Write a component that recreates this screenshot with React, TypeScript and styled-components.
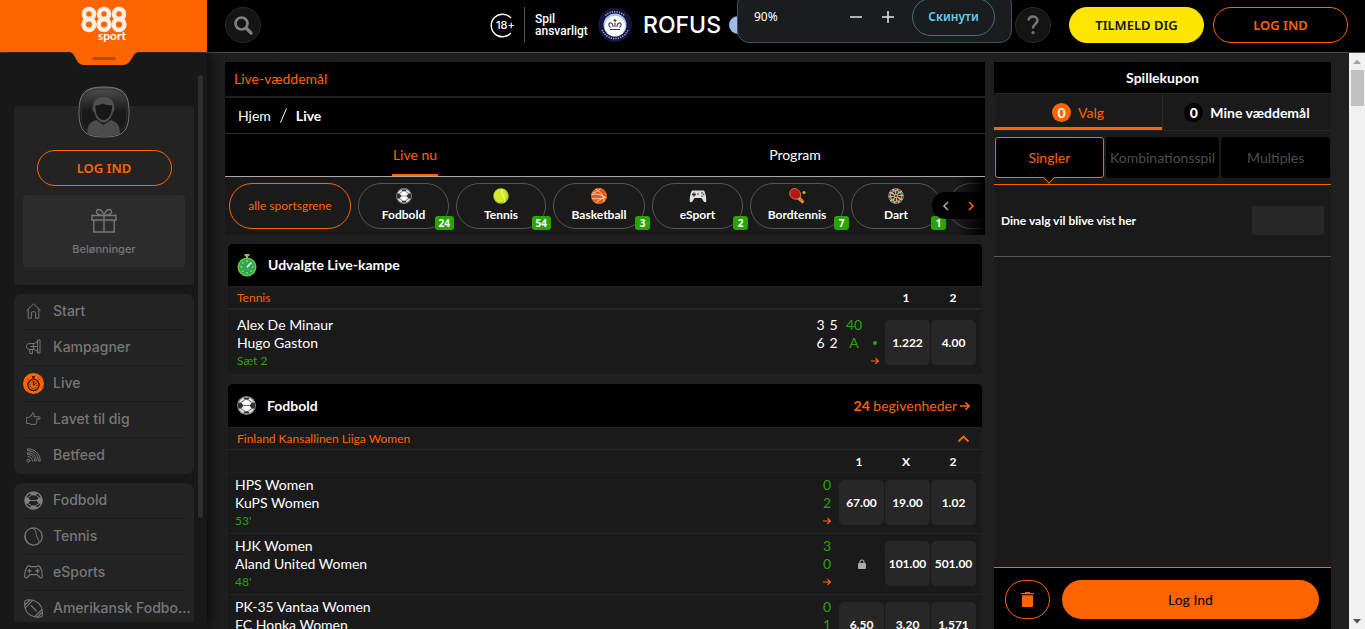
import React from "react";
import styled, { createGlobalStyle } from "styled-components";

const ORANGE = "#ff6400";
const GREEN = "#2aa500";

const Global = createGlobalStyle`
  * { box-sizing: border-box; }
  body { margin: 0; background: #1f1f1f; color: #fff; font-family: Lato, "Noto Sans", sans-serif; font-size: 14px; overflow: hidden; }
  button, input { font-family: inherit; margin: 0; }
  button { cursor: pointer; padding: 0; }
  a { color: inherit; text-decoration: none; }
  h1, h2, h3, ul { margin: 0; padding: 0; list-style: none; font-weight: 400; }
  svg { display: block; flex: none; }
`;

/* ---------- page frame ---------- */
const Page = styled.div`
  height: 100vh;
  display: flex;
  flex-direction: column;
`;
const Header = styled.header`
  flex: none;
  display: flex;
  height: 53px;
  background: #000;
  border-bottom: 1px solid #4a4a4a;
`;
const Brand = styled.a`
  position: relative;
  z-index: 5;
  width: 207px;
  height: 52px;
  background: ${ORANGE};
  display: flex;
  justify-content: center;
  padding-top: 4px;
`;
const BrandTab = styled.svg`
  position: absolute;
  left: 69px;
  top: 52px;
`;
const HeaderBar = styled.div`
  flex: 1;
  display: flex;
  align-items: center;
  padding: 0 17px 2px 18px;
`;
const RoundButton = styled.button`
  width: 36px;
  height: 36px;
  border-radius: 50%;
  border: 1px solid #2a2a2a;
  background: #141414;
  display: flex;
  align-items: center;
  justify-content: center;
`;
const Safe = styled.div`
  margin-left: auto;
  display: flex;
  align-items: center;
`;
const SafeText = styled.a`
  border-left: 1px solid #555;
  margin: 0 12px 0 9px;
  padding: 6px 0 6px 10px;
  font: 500 12px/12px Roboto, sans-serif;
  width: 62px;
`;
const Rofus = styled.a`
  display: flex;
  align-items: center;
  gap: 11px;
  font: 500 23px/26px Inter, sans-serif;
`;
const RofusDot = styled.span`
  width: 18px;
  height: 18px;
  margin: 0 268px 0 8px;
  border-radius: 50%;
  background: #9dbcea;
`;
const PillButton = styled.button<{ $solid?: boolean; $ml?: number }>`
  width: 135px;
  height: 36px;
  margin-left: ${(p) => p.$ml ?? 0}px;
  border-radius: 18px;
  border: 1px solid ${(p) => (p.$solid ? "#ffe600" : ORANGE)};
  background: ${(p) => (p.$solid ? "#ffe600" : "transparent")};
  color: ${(p) => (p.$solid ? "#111" : ORANGE)};
  font: 600 13px/18px "Noto Sans", sans-serif;
`;
const Body = styled.div`
  flex: 1;
  min-height: 0;
  display: flex;
`;

/* ---------- browser zoom popup ---------- */
const ZoomPopup = styled.div`
  position: absolute;
  z-index: 10;
  top: -8px;
  right: 353px;
  width: 275px;
  height: 51px;
  padding: 8px 16px 0;
  display: flex;
  align-items: center;
  background: #191d20;
  border: 1px solid #465053;
  border-radius: 12px;
  font: 12px/16px "Noto Sans", sans-serif;
`;
const ZoomLevel = styled.span`
  flex: 1;
  padding-bottom: 9px;
`;
const ZoomStep = styled.button`
  width: 32px;
  height: 32px;
  margin-bottom: 9px;
  border: 0;
  background: none;
  display: flex;
  align-items: center;
  justify-content: center;
`;
const ZoomReset = styled.button`
  width: 83px;
  height: 38px;
  margin: 0 0 9px 8px;
  border: 1px solid #4f6a6e;
  border-radius: 19px;
  background: none;
  color: #63cfe6;
  font: 600 12px/18px "Noto Sans", sans-serif;
`;

/* ---------- sidebar ---------- */
const Sidebar = styled.aside`
  position: relative;
  z-index: 2;
  flex: none;
  width: 207px;
  background: #181818;
  box-shadow: 0 0 16px #000;
  padding: 22px 4px 7px 14px;
  display: flex;
  justify-content: space-between;
`;
const SideScroll = styled.div`
  width: 180px;
  overflow: hidden;
  display: flex;
  flex-direction: column;
`;
const SideThumb = styled.div`
  width: 5px;
  height: 81%;
  border-radius: 3px;
  background: #2e2e2e;
`;
const Profile = styled.section`
  flex: none;
  margin-top: 31px;
  height: 179px;
  padding: 0 9px;
  border-radius: 4px;
  background: #232323;
  display: flex;
  flex-direction: column;
  align-items: center;
`;
const Avatar = styled.div`
  margin: -20px 0 12px;
  width: 52px;
  height: 52px;
  flex: none;
`;
const Rewards = styled.a`
  width: 100%;
  height: 72px;
  margin-top: 9px;
  padding-top: 13px;
  border-radius: 4px;
  background: #2c2c2c;
  color: #777;
  display: flex;
  flex-direction: column;
  align-items: center;
  gap: 8px;
  font: 500 11px/16px Inter, sans-serif;
`;
const Menu = styled.ul`
  flex: none;
  margin-top: 9px;
  padding: 0 9px;
  border-radius: 8px;
  background: #232323;
`;
const MenuItem = styled.li`
  height: 36px;
  border-bottom: 1px solid #1c1c1c;
  &:last-child { border-bottom: 0; }
`;
const MenuLink = styled.a`
  height: 34px;
  display: flex;
  align-items: center;
  gap: 9px;
  color: #777;
  white-space: nowrap;
  font: 500 14px/20px Inter, sans-serif;
`;
const IconSlot = styled.span`
  flex: none;
  width: 21px;
  height: 21px;
  display: flex;
  align-items: center;
  justify-content: center;
`;

/* ---------- centre column ---------- */
const Main = styled.main`
  flex: 1;
  min-width: 0;
  overflow: hidden;
  margin: 9px 9px 0 18px;
`;
const TitleBar = styled.h1`
  height: 34px;
  margin-bottom: 2px;
  padding: 0 9px;
  background: #000;
  color: ${ORANGE};
  font-size: 14px;
  line-height: 34px;
`;
const Crumbs = styled.nav`
  height: 36px;
  padding: 0 13px;
  display: flex;
  align-items: center;
  gap: 9px;
  background: #000;
  border-bottom: 1px solid #2b2b2b;
  font-size: 14px;
`;
const Tabs = styled.div`
  display: flex;
  height: 43px;
  background: #000;
  border-bottom: 1px solid #aaa;
`;
const Tab = styled.button<{ $on?: boolean }>`
  flex: 1;
  border: 0;
  background: none;
  color: ${(p) => (p.$on ? ORANGE : "#fff")};
  font-size: 14px;
  display: flex;
  justify-content: center;
  span {
    padding: 0 1px;
    line-height: 42px;
    height: 42px;
    border-bottom: 2px solid ${(p) => (p.$on ? ORANGE : "transparent")};
  }
`;
const Strip = styled.div`
  position: relative;
  height: 58px;
  padding: 6px 4px;
  overflow: hidden;
  background: #1a1a1a;
  display: flex;
  gap: 7px;
`;
const Sport = styled.button<{ $w: number; $on?: boolean }>`
  position: relative;
  flex: none;
  width: ${(p) => p.$w}px;
  height: 46px;
  border: 1px solid ${(p) => (p.$on ? ORANGE : "#555")};
  border-radius: 23px;
  background: none;
  color: ${(p) => (p.$on ? ORANGE : "#fff")};
  font-size: 12px;
  font-weight: ${(p) => (p.$on ? 400 : 700)};
  line-height: 16px;
  display: flex;
  flex-direction: column;
  align-items: center;
  justify-content: center;
  gap: 3px;
  padding-bottom: ${(p) => (p.$on ? 0 : 1)}px;
`;
const Count = styled.span`
  position: absolute;
  right: -6px;
  bottom: -2px;
  height: 14px;
  min-width: 15px;
  padding: 0 4px;
  border-radius: 3px;
  background: ${GREEN};
  color: #fff;
  font: 700 10px/14px "Noto Sans", sans-serif;
`;
const Fade = styled.div`
  position: absolute;
  right: 0;
  top: 0;
  bottom: 0;
  width: 28px;
  background: linear-gradient(90deg, transparent, #000);
`;
const Pager = styled.div`
  position: absolute;
  right: 0;
  top: 15px;
  width: 53px;
  height: 27px;
  border-radius: 14px 0 0 14px;
  background: #000;
  display: flex;
`;
const PagerButton = styled.button`
  width: 26px;
  border: 0;
  background: none;
  display: flex;
  align-items: center;
  justify-content: center;
`;
const Card = styled.section`
  margin: 9px 3px 0;
  border-radius: 5px;
  overflow: hidden;
  background: #1a1a1a;
  & + & { margin-top: 10px; }
`;
const CardHead = styled.div<{ $h: number }>`
  height: ${(p) => p.$h}px;
  padding: 0 12px 0 9px;
  background: #000;
  border-bottom: 1px solid #222;
  display: flex;
  align-items: center;
  gap: 11px;
`;
const CardTitle = styled.h2`
  flex: 1;
  font-size: 14px;
  line-height: 18px;
  font-weight: 700;
`;
const MoreLink = styled.a`
  color: ${ORANGE};
  font-size: 14px;
  display: flex;
  align-items: center;
  gap: 3px;
`;
const SubHead = styled.div<{ $compact?: boolean; $plain?: boolean }>`
  height: ${(p) => (p.$compact ? 22 : 23)}px;
  padding: 0 6px 0 9px;
  display: flex;
  align-items: center;
  border-bottom: ${(p) => (p.$plain ? "0" : p.$compact ? "1px solid #262626" : "2px solid #262626")};
`;
const League = styled.h3`
  flex: 1;
  color: ${ORANGE};
  font-size: 12px;
`;
const Collapse = styled.button`
  border: 0;
  margin-right: 6px;
  background: none;
`;
const Cols = styled.div`
  display: flex;
  gap: 1px;
  margin-left: auto;
  span {
    width: 46px;
    text-align: center;
    font-size: 12px;
    font-weight: 700;
  }
`;
const EventRow = styled.article<{ $lined?: boolean }>`
  display: flex;
  align-items: flex-start;
  height: ${(p) => (p.$lined ? 61 : 64)}px;
  padding: ${(p) => (p.$lined ? "3px 6px 0 7px" : "6px 6px 0 9px")};
  border-top: ${(p) => (p.$lined ? "1px solid #202020" : "0")};
  & + & { border-top-color: #242424; }
`;
const Teams = styled.a`
  flex: 1;
  font-size: 14px;
  line-height: 18px;
  display: flex;
  flex-direction: column;
  small {
    color: ${GREEN};
    font-size: 12px;
  }
`;
const ScoreCol = styled.div<{ $w: number; $live?: boolean }>`
  width: ${(p) => p.$w}px;
  color: ${(p) => (p.$live ? GREEN : "#fff")};
  font-size: 14px;
  line-height: 18px;
  display: flex;
  flex-direction: column;
  align-items: center;
`;
const LineBox = styled.span`
  height: 18px;
  display: flex;
  align-items: center;
`;
const ServeDot = styled.i`
  width: 4px;
  height: 4px;
  border-radius: 50%;
  background: ${GREEN};
`;
const Odds = styled.div`
  display: flex;
  gap: 1px;
  margin: 4px 0 0 4px;
`;
const Odd = styled.button<{ $locked?: boolean }>`
  width: 45px;
  height: 45px;
  border: 0;
  border-radius: 5px;
  background: ${(p) => (p.$locked ? "transparent" : "#272727")};
  color: #fff;
  font-size: 12px;
  font-weight: 700;
  display: flex;
  align-items: center;
  justify-content: center;
`;

/* ---------- bet slip ---------- */
const Slip = styled.aside`
  flex: none;
  width: 337px;
  margin: 9px 18px 0 0;
  background: #1a1a1a;
  display: flex;
  flex-direction: column;
`;
const SlipTitle = styled.h2`
  height: 32px;
  background: #000;
  border-bottom: 1px solid #222;
  text-align: center;
  font-size: 14px;
  font-weight: 700;
  line-height: 32px;
`;
const SlipTabs = styled.div`
  height: 37px;
  display: flex;
  border-bottom: 1px solid #272727;
`;
const SlipTab = styled.button<{ $on?: boolean }>`
  flex: 1;
  border: 0;
  border-left: ${(p) => (p.$on ? "0" : "1px solid #2b2b2b")};
  box-shadow: ${(p) => (p.$on ? `inset 0 -3px 0 ${ORANGE}` : "none")};
  background: none;
  color: ${(p) => (p.$on ? ORANGE : "#fff")};
  font-size: 14px;
  font-weight: ${(p) => (p.$on ? 400 : 700)};
  display: flex;
  align-items: center;
  justify-content: center;
  gap: 7px;
`;
const Bubble = styled.b<{ $on?: boolean }>`
  width: 19px;
  height: 19px;
  border-radius: 50%;
  background: ${(p) => (p.$on ? ORANGE : "#000")};
  color: #fff;
  font-size: 14px;
  line-height: 19px;
`;
const Kinds = styled.div`
  display: flex;
  gap: 2px;
  padding: 6px 1px;
  border-bottom: 1px solid ${ORANGE};
`;
const Kind = styled.button<{ $on?: boolean; $wide?: boolean }>`
  position: relative;
  flex: ${(p) => (p.$wide ? 114 : 109)} 1 0;
  height: 41px;
  border: 1px solid ${(p) => (p.$on ? ORANGE : "#000")};
  border-radius: 3px;
  background: #000;
  color: ${(p) => (p.$on ? ORANGE : "#4c4c4c")};
  font-size: 14px;
`;
const Notch = styled.i`
  position: absolute;
  left: 50%;
  bottom: -5px;
  width: 8px;
  height: 8px;
  margin-left: -4px;
  background: #000;
  border: solid ${ORANGE};
  border-width: 0 1px 1px 0;
  transform: rotate(45deg);
`;
const Empty = styled.div`
  height: 72px;
  padding: 0 7px;
  display: flex;
  align-items: center;
  justify-content: space-between;
  border-bottom: 1px solid #555;
  font-size: 12px;
  font-weight: 700;
`;
const Stub = styled.div`
  width: 72px;
  height: 29px;
  border-radius: 2px;
  background: #272727;
`;
const SlipFoot = styled.div`
  margin-top: auto;
  height: 62px;
  padding: 12px 12px 0 11px;
  display: flex;
  gap: 12px;
  background: #000;
  border-top: 1px solid ${ORANGE};
`;
const Trash = styled.button`
  width: 45px;
  height: 39px;
  border: 1px solid ${ORANGE};
  border-radius: 20px;
  background: none;
  display: flex;
  align-items: center;
  justify-content: center;
`;
const SlipLogin = styled.button`
  flex: 1;
  height: 39px;
  border: 0;
  border-radius: 20px;
  background: ${ORANGE};
  color: #000;
  font-size: 14px;
`;
const PageScroll = styled.div`
  flex: none;
  width: 16px;
  background: #f1f1f1;
  display: flex;
  flex-direction: column;
  align-items: center;
  padding: 6px 0 5px;
`;
const PageThumb = styled.div`
  width: 13px;
  height: 36px;
  margin: 6px 0 auto;
  background: #c1c1c1;
`;

/* ---------- icons ---------- */
const line = { fill: "none", stroke: "#777", strokeWidth: 1, strokeLinecap: "round", strokeLinejoin: "round" } as const;

const Arrow = ({ s = 8 }: { s?: number }) => (
  <svg width={s} height={s} viewBox="0 0 8 8" fill="none" stroke={ORANGE} strokeWidth="1.2">
    <path d="M0 4h7.2M4.4 1.1L7.3 4 4.4 6.9" />
  </svg>
);

const Football = ({ s = 16 }: { s?: number }) => (
  <svg width={s} height={s} viewBox="0 0 20 20">
    <circle cx="10" cy="10" r="9.200" fill="#e8e8e8" stroke="#8d8d8d" strokeWidth="1.400" />
    <path d="M6.800 1.800h6.400L11.800 4H8.200zM6.800 18.200h6.400L11.800 16H8.200zM1.400 7l2.800-.2L6.800 10l-2.600 3.400-2.600-.2A9 9 0 0 1 1.400 7zM18.600 7l-2.800-.2L13.200 10l2.600 3.400 2.600-.2a9 9 0 0 0 .2-6.200z" fill="#2f2f2f" />
    <path d="M8.200 4L4.200 6.800M11.800 4l4 2.800M8.200 16l-4-2.600M11.800 16l4-2.600M6.800 10h6.400" stroke="#555" strokeWidth=".9" />
    <circle cx="10" cy="7.200" r="2.500" fill="#fff" />
    <circle cx="10" cy="12.900" r="2.500" fill="#fff" />
  </svg>
);

const TennisBall = () => (
  <svg width="16" height="16" viewBox="0 0 16 16">
    <circle cx="8" cy="8" r="7.700" fill="#a8d51f" />
    <circle cx="7.500" cy="7.500" r="6.400" fill="#d9ea2c" />
    <path d="M8.500 .8c.8 3 .4 5 2 8 1 2 1.300 3.600 1 5.400" fill="none" stroke="#f4f7c0" strokeWidth=".9" />
  </svg>
);

const Basket = () => (
  <svg width="16" height="16" viewBox="0 0 16 16">
    <circle cx="8" cy="8" r="7.700" fill="#e85a16" stroke="#f08a2a" strokeWidth=".6" />
    <path d="M.6 6.500c5-1 10 0 14.600 3.500M4.500 1.200c5 2 8.500 7 8.500 12.600M1 10.500c4 .5 8 .5 13.500-1M9.500 .8C7 3 4 4.500 1.500 5M5 15c1.500-2.500 5-4 8-5" fill="none" stroke="#fbd9bd" strokeWidth=".9" />
  </svg>
);

const Pad = () => (
  <svg width="18" height="16" viewBox="0 0 18 16">
    <path d="M3.500 2.500h11c1.500 0 3 7 2.800 10.500-.1 1.600-2 1.600-2.800.2L12.500 10h-7l-2 3.200C2.700 14.600.8 14.600.7 13 .5 9.500 2 2.500 3.500 2.500z" fill="#e0e0e0" />
    <path d="M5 4.500v4M3 6.500h4" stroke="#333" strokeWidth="1.400" />
    <circle cx="13" cy="4.800" r=".9" fill="#35a" /><circle cx="14.500" cy="6.500" r=".9" fill="#d33" /><circle cx="13" cy="8.200" r=".9" fill="#3a3" />
    <circle cx="9" cy="6" r="1" fill="#777" />
  </svg>
);

const Paddle = () => (
  <svg width="18" height="16" viewBox="0 0 18 16">
    <path d="M8.500 10.500L11.500 8l5 5.500-2.200 2.300z" fill="#d98a3e" />
    <path d="M5.500.6C9-.2 13 3.500 12.700 8c-1 2.500-4.500 4-7 2.800C.5 9 .3 2 5.500.6z" fill="#b5161c" stroke="#d98a3e" strokeWidth=".9" />
    <circle cx="16" cy="4.500" r="1.500" fill="#f5a300" />
  </svg>
);

const DartBoard = () => (
  <svg width="16" height="16" viewBox="0 0 16 16">
    <circle cx="8" cy="8" r="7.700" fill="#c9bd9d" />
    <circle cx="8" cy="8" r="6.600" fill="none" stroke="#b8262a" strokeWidth="1.500" strokeDasharray="2.500 5.800" />
    <circle cx="8" cy="8" r="6.600" fill="none" stroke="#2e7a3a" strokeWidth="1.500" strokeDasharray="2.500 5.800" strokeDashoffset="4.100" />
    <circle cx="8" cy="8" r="3.600" fill="none" stroke="#26351f" strokeWidth="3.200" strokeDasharray="1.500 1.300" />
    <circle cx="8" cy="8" r="1.300" fill="#b8262a" />
  </svg>
);

const Stopwatch = () => (
  <svg width="20" height="23" viewBox="0 0 20 23">
    <path d="M7.500 0h5v2.200H11V4.500H9V2.200H7.500z" fill="#8cc63f" />
    <circle cx="10" cy="13" r="8.800" fill="#2fa84f" stroke="#7cc242" strokeWidth="1.400" />
    <path d="M10 6.500v1.500M10 18v1.500M3.500 13H5M15 13h1.500M5.400 8.400l1 1M5.400 17.600l1-1M14.600 17.600l-1-1" stroke="#c9efcf" strokeWidth="1.100" />
    <path d="M10 13.200L14.300 8.500" stroke="#fff" strokeWidth="1.500" />
  </svg>
);

const sideIcons: Record<string, React.ReactNode> = {
  Start: (
    <svg width="15" height="16" viewBox="0 0 15 16" {...line}><path d="M.8 7.500L7.500.8l6.700 6.700M2.200 6.400v8.800h3.200V9.800a1 1 0 0 1 1-1h2.200a1 1 0 0 1 1 1v5.400h3.200V6.400" /></svg>
  ),
  Kampagner: (
    <svg width="15" height="16" viewBox="0 0 15 16" {...line}><path d="M12 1h2v13h-2zM12 2.500L8 4.500H3.500C1.500 4.500.5 6 .5 7.400s1 3.100 3 3.100H8l4 2M5 7.500h5M7.500 5v5M3.500 10.500l.5 4h2.500l-.2-4" /></svg>
  ),
  Live: (
    <svg width="21" height="21" viewBox="0 0 21 21" fill="none">
      <circle cx="10.500" cy="10.500" r="10.500" fill={ORANGE} />
      <g stroke="#2b1a10">
        <path d="M9 4h3M10.500 4v2" strokeWidth="1.600" />
        <circle cx="10.500" cy="12" r="5.600" strokeWidth="1.300" />
        <circle cx="10.500" cy="12" r="3.500" strokeDasharray="1.200 .9" />
        <path d="M10.500 8v4.500M10.500 12.500l2.300-2.500M5.500 7L4.500 6M15.500 7l1-1" />
      </g>
    </svg>
  ),
  "Lavet til dig": (
    <svg width="15" height="14" viewBox="0 0 15 14" {...line}><path d="M.7 5.500h2L6 3.200 6.300.8c1-.4 1.900.3 1.900 1.600L8 4.800h5.200c1.400 0 1.400 2.100 0 2.100h-2.700c1.200.3 1 1.900 0 2 .8.400.6 1.700-.3 1.800.4.600 0 1.700-.8 1.700H5l-2-1H.7z" /></svg>
  ),
  Betfeed: (
    <svg width="15" height="15" viewBox="0 0 15 15" {...line}><circle cx="2.300" cy="12.700" r="1.500" /><path d="M2 .8c7 0 12.200 5.200 12.200 12.200h-1.900C12.300 7 8 2.700 2 2.700zM2 4.700c4.700 0 8.300 3.600 8.300 8.300H8.500C8.500 9.200 5.800 6.500 2 6.500zM2 8.500c2.700.2 4.400 1.900 4.500 4.500" /></svg>
  ),
  Fodbold: (
    <svg width="19" height="19" viewBox="0 0 20 20" fill="none" stroke="#808080">
      <circle cx="10" cy="10" r="9" strokeWidth="1.400" />
      <path d="M6.500 2h7L12 4.200H8zM6.500 18h7L12 15.800H8zM1.500 7.500l2.500-.5 2.500 3L4 13l-2.500-.5zM18.500 7.500L16 7l-2.500 3 2.500 3 2.500-.5z" fill="#808080" />
      <path d="M8 4.200L4 7M12 4.200L16 7M8 15.800L4 13M12 15.800l4-2.800M6.500 10h7" />
    </svg>
  ),
  Tennis: (
    <svg width="19" height="19" viewBox="0 0 19 19" {...line}><circle cx="9.500" cy="9.500" r="8.700" strokeWidth="1.300" /><path d="M7.500 1.200c5 .6 4.300 4.300 5 7.300.6 2.500 2.700 4.500 2.700 7M1 9c.5 4 3 7.500 7.500 9" /></svg>
  ),
  eSports: (
    <svg width="19" height="14" viewBox="0 0 19 14" {...line}><path d="M3.200 1.700C4 .6 5.500.5 6.300 1.700h6.400C13.500.5 15 .6 15.800 1.700c1.500 2 2.600 7 2.500 9.500-.1 2.200-2 2.200-3 .8L13.200 9.600H5.800L3.700 12c-1 1.400-2.900 1.400-3-.8-.1-2.500 1-7.500 2.500-9.500zM5.500 4v3.600M3.700 5.800h3.600M13.500 3.900v3.800M11.700 5.800h3.600" strokeWidth="1.200" /></svg>
  ),
  "Amerikansk Fodbo...": (
    <svg width="19" height="19" viewBox="0 0 19 19" {...line}><path d="M1.200 1.400C6-.4 12 1.600 15 4.600c3 3 4.200 9 2.800 13-4.600 1.500-10.300 0-13.500-3S-.2 6 1.200 1.400zM1 6l5.200-5M2 8.500L8.500 1.300M10.500 17.900l7.500-7.400M13 18.300l5.300-5.300M7 6.500l5.500 5.500" strokeWidth="1.100" /></svg>
  ),
};

const menus = [
  ["Start", "Kampagner", "Live", "Lavet til dig", "Betfeed"],
  ["Fodbold", "Tennis", "eSports", "Amerikansk Fodbo..."],
];

const sports: [string, number, number, React.ReactNode][] = [
  ["Fodbold", 24, 91, <Football />],
  ["Tennis", 54, 90, <TennisBall />],
  ["Basketball", 3, 92, <Basket />],
  ["eSport", 2, 91, <Pad />],
  ["Bordtennis", 7, 94, <Paddle />],
  ["Dart", 1, 90, <DartBoard />],
];

const matches = [
  { home: "HPS Women", away: "KuPS Women", time: "53'", score: [0, 2], odds: ["67.00", "19.00", "1.02"] },
  { home: "HJK Women", away: "Aland United Women", time: "48'", score: [3, 0], odds: ["", "101.00", "501.00"] },
  { home: "PK-35 Vantaa Women", away: "FC Honka Women", time: "", score: [0, 1], odds: ["6.50", "3.20", "1.571"] },
];

export default function App() {
  return (
    <Page>
      <Global />
      <Header>
        <Brand href="#" aria-label="888sport">
          <svg width="60" height="42" viewBox="0 0 60 42">
            <g fill="none" stroke="#ffeee2" strokeWidth="4.600">
              {[15, 30, 45].map((x) => (
                <React.Fragment key={x}>
                  <circle cx={x} cy="10" r="5" />
                  <circle cx={x} cy="20.500" r="5.400" />
                </React.Fragment>
              ))}
            </g>
            <text x="24" y="36" fill="#fff" fontFamily="Lato, sans-serif" fontSize="12" fontWeight="700">sport</text>
          </svg>
          <BrandTab width="70" height="13" viewBox="0 0 70 13">
            <path d="M0 0C7 0 6 13 15 13H54C63 13 63 0 70 0z" fill={ORANGE} />
            <rect x="23" y="5" width="24" height="3" rx="1.500" fill="#b84a00" />
          </BrandTab>
        </Brand>
        <HeaderBar>
          <RoundButton aria-label="Søg">
            <svg width="20" height="20" viewBox="0 0 20 20" fill="none" stroke="#808080">
              <circle cx="8.500" cy="8.500" r="6" strokeWidth="2.600" />
              <path d="M13 13l5 5" strokeWidth="3.200" strokeLinecap="round" />
            </svg>
          </RoundButton>
          <Safe>
            <svg width="25" height="25" viewBox="0 0 25 25">
              <path d="M21 5A11.300 11.300 0 1 0 21 20" fill="none" stroke="#fff" strokeWidth="1.400" />
              <text x="6" y="16" fill="#fff" fontFamily="Inter, sans-serif" fontSize="11" fontWeight="500">18+</text>
            </svg>
            <SafeText href="#">Spil ansvarligt</SafeText>
            <Rofus href="#">
              <svg width="34" height="34" viewBox="0 0 34 34">
                <circle cx="17" cy="17" r="17" fill="#15153f" />
                <path d="M7.500 7.500A13.800 13.800 0 0 1 26.500 7.500M4.200 22A13.800 13.800 0 0 0 29.800 22" fill="none" stroke="#a9acc8" strokeWidth="1.600" strokeDasharray="1.200 1.200" />
                <circle cx="17" cy="17" r="11.500" fill="#a9c3ea" />
                <circle cx="17" cy="18" r="10.300" fill="#fff" />
                <path d="M12 21.500h10M12.500 19.500c-3-2.500-1.500-5 .5-4.500 1.500.3 2 2 2 4M21.500 19.500c3-2.500 1.500-5-.5-4.500-1.500.3-2 2-2 4M17 19v-4M15.500 12.500h3M17 11v3.500" fill="none" stroke="#3a3a55" strokeWidth="1.100" />
              </svg>
              ROFUS
            </Rofus>
            <RofusDot />
          </Safe>
          <RoundButton aria-label="Hjælp">
            <svg width="14" height="20" viewBox="0 0 14 20" fill="none" stroke="#777" strokeWidth="2.400">
              <path d="M2.500 5.500C2.500 0 11.500.3 11.500 5.600 11.500 9 7 9 7 13.500" />
              <circle cx="7" cy="17.500" r="1.500" fill="#777" stroke="none" />
            </svg>
          </RoundButton>
          <PillButton $solid $ml={18}>TILMELD DIG</PillButton>
          <PillButton $ml={9}>LOG IND</PillButton>
        </HeaderBar>
      </Header>

      <ZoomPopup>
        <ZoomLevel>90%</ZoomLevel>
        <ZoomStep aria-label="Zoom ud">
          <svg width="12" height="12" viewBox="0 0 12 12" stroke="#e3e3e3" strokeWidth="1.500"><path d="M0 6h12" /></svg>
        </ZoomStep>
        <ZoomStep aria-label="Zoom ind">
          <svg width="12" height="12" viewBox="0 0 12 12" stroke="#e3e3e3" strokeWidth="1.500"><path d="M0 6h12M6 0v12" /></svg>
        </ZoomStep>
        <ZoomReset>Скинути</ZoomReset>
      </ZoomPopup>

      <Body>
        <Sidebar>
          <SideScroll>
            <Profile>
              <Avatar>
                <svg width="52" height="52" viewBox="0 0 52 52">
                  <defs>
                    <linearGradient id="glass" x1="0" y1="0" x2="0" y2="1">
                      <stop offset="0" stopColor="#505050" />
                      <stop offset=".5" stopColor="#181818" />
                      <stop offset="1" stopColor="#1c1c1c" />
                    </linearGradient>
                  </defs>
                  <path d="M26 1c19 0 25 6 25 25s-6 25-25 25S1 45 1 26 7 1 26 1z" fill="url(#glass)" stroke="#777" />
                  <path d="M26 3c17.500 0 23 5.500 23 23s-5.500 23-23 23S3 43.500 3 26 8.500 3 26 3z" fill="none" stroke="#333" />
                  <path d="M9.500 48c-1-8 2-12 9-14l7 5 7-5c7 2 10 6 9 14-7 3-25 3-32 0z" fill="#4c4c4c" />
                  <path d="M15 21C13.500 7.500 37.500 7.500 36 21c1 1 .5 4-1 5-1.500 6-5.500 10.500-9.500 10.500S17.500 32 16 26c-1.500-1-2-4-1-5z" fill="#505050" />
                  <path d="M17.500 19.500c3 0 5-.8 6.500-2 4 1.600 7 1.500 10 2 .5 7-3 14.500-8.500 14.500s-8.500-7.500-8-14.500z" fill="#171717" />
                </svg>
              </Avatar>
              <PillButton>LOG IND</PillButton>
              <Rewards href="#">
                <svg width="26" height="25" viewBox="0 0 26 25" fill="none" stroke="#777" strokeWidth="1.400">
                  <path d="M1 7.500h24v4.500H1zM2.800 12v12h20.400V12M13 7.500V24M13 7.500C11 1 6 0 5.500 3.500 5.300 6 9 7.500 13 7.500zM13 7.500c2-6.500 7-7.500 7.500-4 .2 2.500-3.500 4-7.500 4z" />
                </svg>
                Belønninger
              </Rewards>
            </Profile>
            {menus.map((items, i) => (
              <Menu key={i}>
                {items.map((name) => (
                  <MenuItem key={name}>
                    <MenuLink href="#">
                      <IconSlot>{sideIcons[name]}</IconSlot>
                      {name}
                    </MenuLink>
                  </MenuItem>
                ))}
              </Menu>
            ))}
          </SideScroll>
          <SideThumb />
        </Sidebar>

        <Main>
          <TitleBar>Live-væddemål</TitleBar>
          <Crumbs>
            <a href="#">Hjem</a>
            <svg width="7" height="15" viewBox="0 0 7 15" stroke="#fff"><path d="M.5 14.500L6.500.5" /></svg>
            <b>Live</b>
          </Crumbs>
          <Tabs>
            <Tab $on><span>Live nu</span></Tab>
            <Tab><span>Program</span></Tab>
          </Tabs>
          <Strip>
            <Sport $w={122} $on>alle sportsgrene</Sport>
            {sports.map(([name, n, w, icon]) => (
              <Sport key={name} $w={w}>
                {icon}
                {name}
                <Count>{n}</Count>
              </Sport>
            ))}
            <Sport $w={90} aria-label="Næste" />
            <Fade />
            <Pager>
              <PagerButton aria-label="Forrige">
                <svg width="7" height="10" viewBox="0 0 7 10" fill="none" stroke="#aaa" strokeWidth="1.600"><path d="M6 1L2 5l4 4" /></svg>
              </PagerButton>
              <PagerButton aria-label="Næste">
                <svg width="7" height="10" viewBox="0 0 7 10" fill="none" stroke={ORANGE} strokeWidth="1.600"><path d="M1 1l4 4-4 4" /></svg>
              </PagerButton>
            </Pager>
          </Strip>

          <Card>
            <CardHead $h={43}>
              <Stopwatch />
              <CardTitle>Udvalgte Live-kampe</CardTitle>
            </CardHead>
            <SubHead>
              <League>Tennis</League>
              <Cols><span>1</span><span>2</span></Cols>
            </SubHead>
            <EventRow>
              <Teams href="#">
                <span>Alex De Minaur</span>
                <span>Hugo Gaston</span>
                <small>Sæt 2</small>
              </Teams>
              <ScoreCol $w={13}><span>3</span><span>6</span></ScoreCol>
              <ScoreCol $w={13}><span>5</span><span>2</span></ScoreCol>
              <ScoreCol $w={28} $live><span>40</span><span>A</span></ScoreCol>
              <ScoreCol $w={13}><LineBox /><LineBox><ServeDot /></LineBox><LineBox><Arrow /></LineBox></ScoreCol>
              <Odds>
                <Odd>1.222</Odd>
                <Odd>4.00</Odd>
              </Odds>
            </EventRow>
          </Card>

          <Card>
            <CardHead $h={44}>
              <Football s={19} />
              <CardTitle>Fodbold</CardTitle>
              <MoreLink href="#"><span><b>24</b> begivenheder</span><Arrow s={10} /></MoreLink>
            </CardHead>
            <SubHead $compact>
              <League>Finland Kansallinen Liiga Women</League>
              <Collapse aria-label="Skjul">
                <svg width="13" height="9" viewBox="0 0 13 9" fill="none" stroke={ORANGE} strokeWidth="1.800"><path d="M1.500 7.500l5-5 5 5" /></svg>
              </Collapse>
            </SubHead>
            <SubHead $compact $plain>
              <Cols><span>1</span><span>X</span><span>2</span></Cols>
            </SubHead>
            {matches.map((m) => (
              <EventRow key={m.home} $lined>
                <Teams href="#">
                  <span>{m.home}</span>
                  <span>{m.away}</span>
                  <small>{m.time}</small>
                </Teams>
                <ScoreCol $w={16} $live>
                  <span>{m.score[0]}</span>
                  <span>{m.score[1]}</span>
                  <LineBox><Arrow /></LineBox>
                </ScoreCol>
                <Odds>
                  {m.odds.map((o, i) =>
                    o ? (
                      <Odd key={i}>{o}</Odd>
                    ) : (
                      <Odd key={i} $locked aria-label="Låst">
                        <svg width="8" height="10" viewBox="0 0 8 10"><rect y="4" width="8" height="6" rx="1" fill="#aaa" /><path d="M2 4.500V3a2 2 0 0 1 4 0v1.500" fill="none" stroke="#aaa" strokeWidth="1.200" /></svg>
                      </Odd>
                    )
                  )}
                </Odds>
              </EventRow>
            ))}
          </Card>
        </Main>

        <Slip>
          <SlipTitle>Spillekupon</SlipTitle>
          <SlipTabs>
            <SlipTab $on><Bubble $on>0</Bubble>Valg</SlipTab>
            <SlipTab><Bubble>0</Bubble>Mine væddemål</SlipTab>
          </SlipTabs>
          <Kinds>
            <Kind $on>Singler<Notch /></Kind>
            <Kind $wide>Kombinationsspil</Kind>
            <Kind>Multiples</Kind>
          </Kinds>
          <Empty>
            Dine valg vil blive vist her
            <Stub />
          </Empty>
          <SlipFoot>
            <Trash aria-label="Slet alle">
              <svg width="13" height="15" viewBox="0 0 13 15" fill={ORANGE}><path d="M0 1h4V0h5v1h4v1.200H0zM1 3.200h11V14q0 1-1 1H2q-1 0-1-1z" /></svg>
            </Trash>
            <SlipLogin>Log Ind</SlipLogin>
          </SlipFoot>
        </Slip>

        <PageScroll>
          <svg width="8" height="5" viewBox="0 0 8 5"><path d="M0 5l4-4.500L8 5z" fill="#a3a3a3" /></svg>
          <PageThumb />
          <svg width="8" height="5" viewBox="0 0 8 5"><path d="M0 0l4 4.500L8 0z" fill="#505050" /></svg>
        </PageScroll>
      </Body>
    </Page>
  );
}
